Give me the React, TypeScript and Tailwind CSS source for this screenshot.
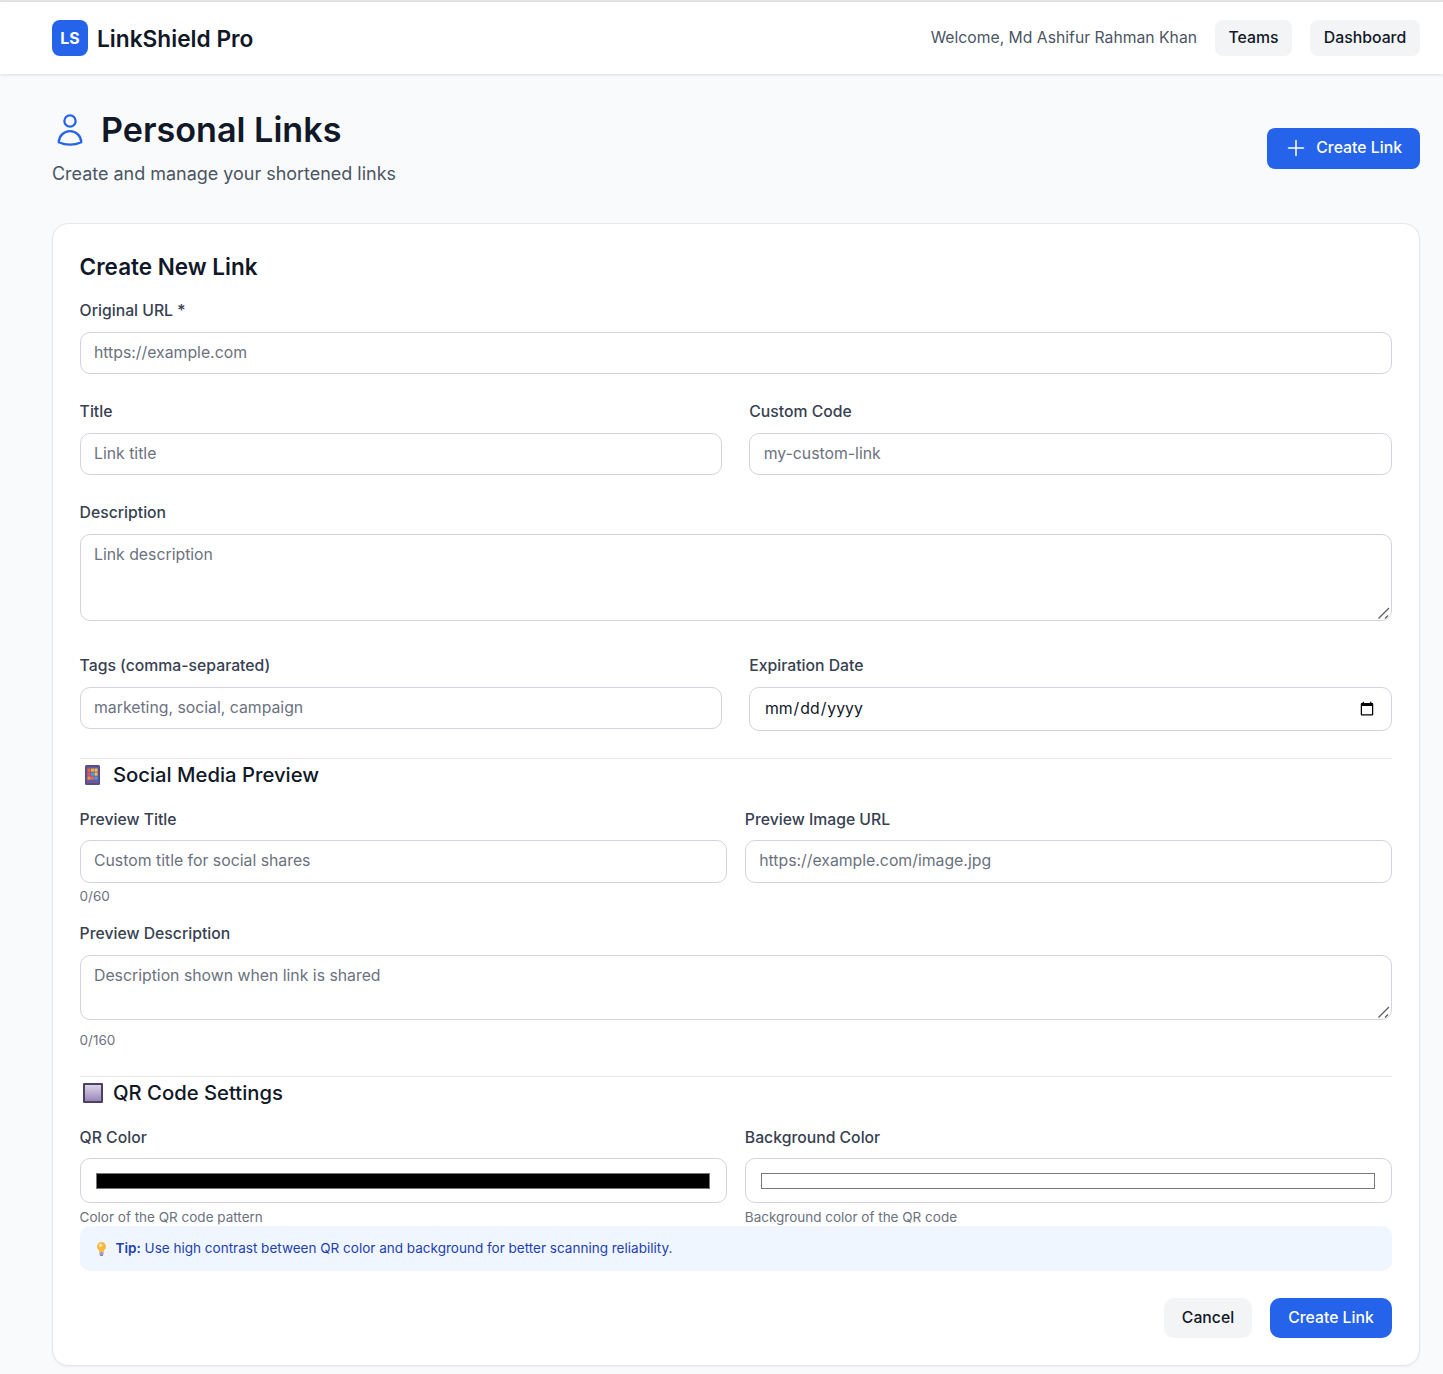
import React from "react";

const inputBase =
  "block w-full rounded-[10px] border border-[#d1d5db] bg-white text-[15.8px] text-[#111827] placeholder:text-[#6b7280] outline-none";
const inputCls = `${inputBase} h-[42px] px-[13.4px] pb-[2px]`;
const tallInputCls = `${inputBase} h-[43px] px-[13.4px] pb-[2px]`;
const dateCls = `${inputBase} h-[44px] pl-[13.6px] pr-[14.4px]`;
const areaCls =
  "block w-full resize-none rounded-[10px] border border-[#d1d5db] bg-white px-[13.4px] py-[8px] text-[15.8px] leading-[24px] text-[#111827] placeholder:text-[#6b7280] outline-none";
const colorCls =
  "block w-full h-[45px] rounded-[10px] border border-[#d1d5db] bg-white pl-[13.4px] pr-[13.6px] pt-[14px] pb-[13px] cursor-pointer [&::-webkit-color-swatch-wrapper]:py-0";

function Field({ label, low, children }: { label: string; low?: boolean; children: React.ReactNode }) {
  return (
    <div className="min-w-0">
      <label
        className={
          low
            ? "block h-[24px] mb-[9px] text-[15.75px] leading-[26px] font-medium text-[#374151]"
            : "block h-[23px] mb-[10px] text-[15.75px] leading-[23px] font-medium text-[#374151]"
        }
      >
        {label}
      </label>
      {children}
    </div>
  );
}

function Hint({ children }: { children: React.ReactNode }) {
  return <p className="h-[20px] text-[13.5px] leading-[20px] text-[#6b7280]">{children}</p>;
}

function Area({ height, placeholder }: { height: string; placeholder: string }) {
  return (
    <div className="relative">
      <textarea className={`${areaCls} ${height}`} placeholder={placeholder} />
      <svg viewBox="0 0 14 14" className="pointer-events-none absolute bottom-[1px] right-[1px] h-[14px] w-[14px]" fill="none" stroke="#5f5f5f" strokeWidth="1.3">
        <path d="M1.5 12.5 12 2M8 12.5l3-3" />
      </svg>
    </div>
  );
}

function PhoneEmoji() {
  return (
    <svg viewBox="0 0 15 20" className="h-[20px] w-[15px]">
      <rect x="0" y="0" width="15" height="20" rx="1.5" fill="#5b4a8a" />
      <rect x="1.5" y="2" width="12" height="16" fill="#6c5a9c" />
      {[
        ["#f2673f", "#f7a83b", "#f6c343"],
        ["#f4533f", "#36a3ee", "#f7c23b"],
        ["#f7953b", "#f25f5a", "#36a3ee"],
      ].map((row, y) =>
        row.map((c, x) => (
          <rect key={`${x}-${y}`} x={2.5 + x * 3.5} y={3.5 + y * 4} width="3" height="3.2" fill={c} />
        ))
      )}
    </svg>
  );
}

function SquareEmoji() {
  return (
    <svg viewBox="0 0 20 20" className="h-[20px] w-[20px]">
      <defs>
        <linearGradient id="qrsq" x1="0" y1="0" x2="0" y2="1">
          <stop offset="0" stopColor="#dcd3e8" />
          <stop offset="1" stopColor="#9a86b8" />
        </linearGradient>
      </defs>
      <rect x="0" y="0" width="20" height="20" rx="1" fill="#4d4163" />
      <rect x="2" y="2" width="16" height="16" fill="url(#qrsq)" />
    </svg>
  );
}

function BulbEmoji() {
  return (
    <svg viewBox="0 0 9 14" className="h-[14px] w-[9px]">
      <path d="M4.5 0a4.5 4.5 0 0 0-2.9 7.9c.5.5.8 1.2.9 2.1h4c.1-.9.4-1.6.9-2.1A4.5 4.5 0 0 0 4.5 0Z" fill="#fbb740" />
      <circle cx="3.6" cy="3.4" r="1.8" fill="#fde2a0" />
      <rect x="2.5" y="10" width="4" height="3" fill="#a79bc4" />
      <rect x="3.2" y="13" width="2.6" height="1" fill="#7d6fa3" />
    </svg>
  );
}

function SectionTitle({ icon, children, top }: { icon: React.ReactNode; children: React.ReactNode; top: string }) {
  return (
    <div className={`border-t border-[#e5e7eb] ${top}`}>
      <div className="flex h-[32px] items-center mb-[16px]">
        <span className="flex w-[33.4px] justify-center pr-[7px]">{icon}</span>
        <h3 className="text-[20.25px] leading-[32px] font-medium text-[#111827]">{children}</h3>
      </div>
    </div>
  );
}

export default function App() {
  return (
    <div className="min-h-[1374px] bg-[#f9fafb] font-['Inter',sans-serif] border-t-2 border-[#e5e5e5]">
      <header className="flex h-[72px] items-center justify-between bg-white pl-[52px] pr-[23px] shadow-[0_1px_3px_rgba(0,0,0,0.12)]">
        <div className="flex items-center gap-[9px]">
          <div className="flex h-[36px] w-[36px] items-center justify-center rounded-[8px] bg-[#2563eb] pt-[1px] text-[15.8px] font-bold text-white">
            LS
          </div>
          <span className="pt-[1px] text-[22.7px] leading-[32px] font-semibold text-[#111827]">LinkShield Pro</span>
        </div>
        <div className="flex items-center">
          <span className="mr-[18px] pb-[1px] text-[15.72px] text-[#4b5563]">Welcome, Md Ashifur Rahman Khan</span>
          <button className="mr-[18px] h-[36px] w-[77px] rounded-[8px] bg-[#f3f4f6] pb-[1px] text-[15.8px] font-medium text-[#111827]">
            Teams
          </button>
          <button className="h-[36px] w-[110px] rounded-[8px] bg-[#f3f4f6] pb-[1px] text-[15.8px] font-medium text-[#111827]">
            Dashboard
          </button>
        </div>
      </header>

      <main className="pl-[52px] pr-[23px]">
        <div className="flex items-center justify-between pt-[34px] pb-[35px]">
          <div>
            <div className="flex h-[44px] items-center gap-[13px]">
              <svg viewBox="0 0 24 24" fill="none" stroke="#2563eb" strokeWidth="1.5" strokeLinecap="round" strokeLinejoin="round" className="h-[36px] w-[36px]">
                <path d="M15.75 6a3.75 3.75 0 1 1-7.5 0 3.75 3.75 0 0 1 7.5 0ZM4.501 20.118a7.5 7.5 0 0 1 14.998 0A17.933 17.933 0 0 1 12 21.75c-2.676 0-5.216-.584-7.499-1.632Z" />
              </svg>
              <h1 className="text-[34.15px] leading-[44px] font-semibold text-[#111827]">Personal Links</h1>
            </div>
            <p className="mt-[8px] text-[17.97px] leading-[28px] text-[#4b5563]">Create and manage your shortened links</p>
          </div>
          <button className="flex h-[41px] items-center gap-[8px] rounded-[8px] bg-[#2563eb] pl-[17px] pr-[18px] text-[15.8px] font-medium text-white">
            <svg viewBox="0 0 24 24" fill="none" stroke="currentColor" strokeWidth="1.5" strokeLinecap="round" strokeLinejoin="round" className="h-[24px] w-[24px]">
              <path d="M12 4.5v15m7.5-7.5h-15" />
            </svg>
            <span className="pb-[1px]">Create Link</span>
          </button>
        </div>

        <section className="rounded-[16px] border border-[#e5e7eb] bg-white pl-[26.6px] pr-[27px] pt-[27px] pb-[27px] shadow-[0_1px_2px_rgba(0,0,0,0.05)]">
          <h2 className="h-[32px] mb-[16px] text-[22.5px] leading-[32px] font-semibold text-[#111827]">Create New Link</h2>

          <Field label="Original URL *">
            <input className={inputCls} placeholder="https://example.com" />
          </Field>

          <div className="mt-[26px] grid grid-cols-2 gap-[27px]">
            <Field label="Title">
              <input className={inputCls} placeholder="Link title" />
            </Field>
            <Field label="Custom Code">
              <input className={inputCls} placeholder="my-custom-link" />
            </Field>
          </div>

          <div className="mt-[26px]">
            <Field label="Description">
              <Area height="h-[87px]" placeholder="Link description" />
            </Field>
          </div>

          <div className="mt-[33px] grid grid-cols-2 gap-[27px]">
            <Field label="Tags (comma-separated)">
              <input className={inputCls} placeholder="marketing, social, campaign" />
            </Field>
            <Field label="Expiration Date">
              <input type="date" className={dateCls} />
            </Field>
          </div>

          <SectionTitle top="mt-[27px]" icon={<PhoneEmoji />}>Social Media Preview</SectionTitle>

          <div className="grid grid-cols-2 gap-[18px]">
            <Field low label="Preview Title">
              <input className={tallInputCls} placeholder="Custom title for social shares" />
              <div className="mt-[3px]">
                <Hint>0/60</Hint>
              </div>
            </Field>
            <Field low label="Preview Image URL">
              <input className={tallInputCls} placeholder="https://example.com/image.jpg" />
            </Field>
          </div>

          <div className="mt-[16px]">
            <Field label="Preview Description">
              <Area height="h-[65px]" placeholder="Description shown when link is shared" />
              <div className="mt-[10px]">
                <Hint>0/160</Hint>
              </div>
            </Field>
          </div>

          <SectionTitle top="mt-[26px]" icon={<SquareEmoji />}>QR Code Settings</SectionTitle>

          <div className="grid grid-cols-2 gap-[18px]">
            <Field low label="QR Color">
              <input type="color" defaultValue="#000000" className={colorCls} />
              <div className="mt-[4px] h-[19px]">
                <Hint>Color of the QR code pattern</Hint>
              </div>
            </Field>
            <Field low label="Background Color">
              <input type="color" defaultValue="#ffffff" className={colorCls} />
              <div className="mt-[4px] h-[19px]">
                <Hint>Background color of the QR code</Hint>
              </div>
            </Field>
          </div>

          <div className="flex h-[45px] items-center gap-[10px] rounded-[10px] bg-[#eff6ff] pl-[17px] text-[13.52px] text-[#1e40af]">
            <BulbEmoji />
            <p>
              <strong className="font-semibold">Tip:</strong> Use high contrast between QR color and background for better scanning reliability.
            </p>
          </div>

          <div className="mt-[27px] flex justify-end gap-[18px]">
            <button className="h-[40px] w-[88px] rounded-[10px] bg-[#f3f4f6] pb-[1px] text-[15.75px] font-medium text-[#111827]">Cancel</button>
            <button className="h-[40px] w-[122px] rounded-[10px] bg-[#2563eb] pb-[1px] text-[15.75px] font-medium text-white">Create Link</button>
          </div>
        </section>
      </main>
    </div>
  );
}
